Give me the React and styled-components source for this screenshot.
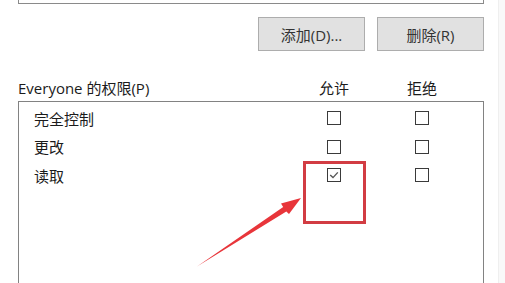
import React from "react";
import styled, { createGlobalStyle } from "styled-components";

const Global = createGlobalStyle`
  html, body { margin: 0; padding: 0; background: #ffffff; }
  body { width: 505px; height: 283px; overflow: hidden; }
  #root { height: 283px; }
`;

const Window = styled.div`
  position: relative;
  height: 283px;
  background: #ffffff;
  display: flex;
  font-family: "Open Sans", "Noto Sans CJK SC", sans-serif;
  color: #1b1b1b;
`;

const Content = styled.div`
  width: 466px;
  padding: 0 0 0 18px;
  display: flex;
  flex-direction: column;
`;

const Edge = styled.div`
  width: 6px;
  border-left: 1px solid #efefef;
  background: #f9f9f9;
  margin-left: 14px;
`;

const TopBox = styled.div`
  width: 464px;
  height: 3px;
  border: 1px solid #8a8a8a;
  border-top: none;
`;

const ButtonRow = styled.div`
  display: flex;
  justify-content: flex-end;
  gap: 12px;
  margin-top: 13px;
`;

const Button = styled.div`
  width: 105px;
  height: 32px;
  border: 1px solid #adadad;
  background: #e1e1e1;
  display: flex;
  align-items: center;
  justify-content: center;
  font-size: 15px;
  color: #333;
`;

const cols = "1fr 60px 28px 60px 32px";

const HeaderRow = styled.div`
  display: grid;
  grid-template-columns: ${cols};
  align-items: center;
  margin-top: 25px;
  height: 22px;
  font-size: 15px;
`;

const ColHead = styled.div`
  text-align: center;
  grid-column: ${(p) => p.$col};
`;

const ListBox = styled.div`
  margin-top: 3px;
  flex: 1;
  border: 1px solid #828282;
  border-bottom: none;
  padding-top: 2px;
`;

const Row = styled.div`
  display: grid;
  grid-template-columns: 1fr 60px 28px 60px 31px;
  align-items: center;
  height: 28.5px;
  padding-left: 15px;
  font-size: 15px;
`;

const Cell = styled.div`
  display: flex;
  justify-content: center;
  grid-column: ${(p) => p.$col};
`;

const Box = styled.div`
  width: 12px;
  height: 12px;
  border: 1px solid #3a3a3a;
  background: #fff;
  display: flex;
  align-items: center;
  justify-content: center;
`;

const Highlight = styled.div`
  position: absolute;
  left: 303px;
  top: 161px;
  width: 57px;
  height: 57px;
  border: 3px solid #d23c43;
`;

const Arrow = styled.svg`
  position: absolute;
  left: 0;
  top: 0;
  pointer-events: none;
`;

const Check = ({ checked }) => (
  <Box>
    {checked && (
      <svg width="12" height="12" viewBox="0 0 12 12">
        <path d="M2.2 6 L5 8.6 L9.8 3.4" fill="none" stroke="#555" strokeWidth="1.4" />
      </svg>
    )}
  </Box>
);

const rows = [
  { label: "完全控制", allow: false },
  { label: "更改", allow: false },
  { label: "读取", allow: true },
];

export default function App() {
  return (
    <>
      <Global />
      <Window>
        <Content>
          <TopBox />
          <ButtonRow>
            <Button>添加(D)...</Button>
            <Button>删除(R)</Button>
          </ButtonRow>
          <HeaderRow>
            <div>Everyone 的权限(P)</div>
            <ColHead $col={2}>允许</ColHead>
            <ColHead $col={4}>拒绝</ColHead>
          </HeaderRow>
          <ListBox>
            {rows.map((r) => (
              <Row key={r.label}>
                <div>{r.label}</div>
                <Cell $col={2}>
                  <Check checked={r.allow} />
                </Cell>
                <Cell $col={4}>
                  <Check />
                </Cell>
              </Row>
            ))}
          </ListBox>
        </Content>
        <Edge />
        <Highlight />
        <Arrow width="505" height="283" viewBox="0 0 505 283">
          <polygon
            points="197,266.5 283.2,207 281,203.6 301,198 289,214 286.3,211.4"
            fill="#e8353a"
          />
        </Arrow>
      </Window>
    </>
  );
}
